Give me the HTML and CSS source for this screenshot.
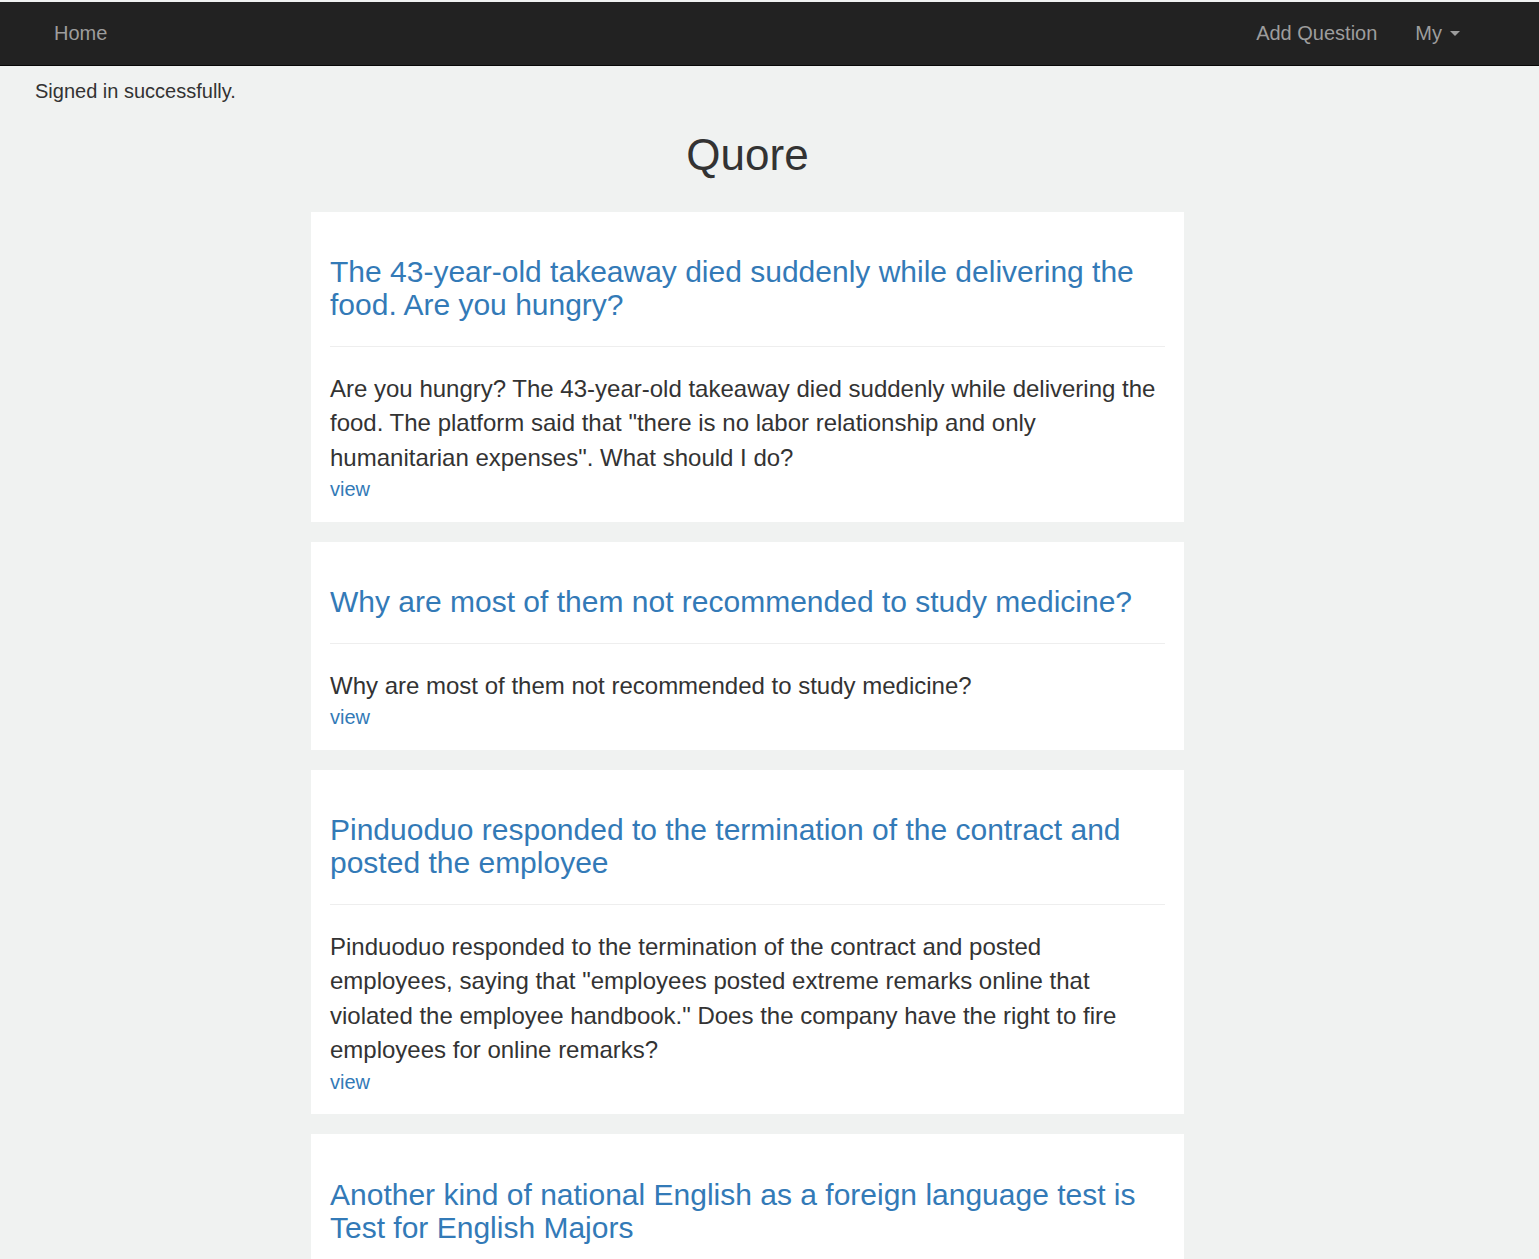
FILE: index.html
```html
<!DOCTYPE html>
<html lang="en">
<head>
<meta charset="utf-8">
<title>Quore</title>
<link rel="stylesheet" href="styles.css">
</head>
<body>
<nav class="navbar">
  <div class="nav-left">
    <a class="nav-link" href="#">Home</a>
  </div>
  <div class="nav-right">
    <a class="nav-link" href="#">Add Question</a>
    <a class="nav-link" href="#">My <span class="caret"></span></a>
  </div>
</nav>
<div class="page">
  <p class="notice">Signed in successfully.</p>
  <h1 class="title">Quore</h1>
  <div class="list">
    <div class="card">
      <h3 class="q-title"><a href="#">The 43-year-old takeaway died suddenly while delivering the food. Are you hungry?</a></h3>
      <hr class="sep">
      <p class="q-body">Are you hungry? The 43-year-old takeaway died suddenly while delivering the food. The platform said that "there is no labor relationship and only humanitarian expenses". What should I do?</p>
      <a class="view" href="#">view</a>
    </div>
    <div class="card">
      <h3 class="q-title"><a href="#">Why are most of them not recommended to study medicine?</a></h3>
      <hr class="sep">
      <p class="q-body">Why are most of them not recommended to study medicine?</p>
      <a class="view" href="#">view</a>
    </div>
    <div class="card">
      <h3 class="q-title"><a href="#">Pinduoduo responded to the termination of the contract and posted the employee</a></h3>
      <hr class="sep">
      <p class="q-body">Pinduoduo responded to the termination of the contract and posted employees, saying that "employees posted extreme remarks online that violated the employee handbook." Does the company have the right to fire employees for online remarks?</p>
      <a class="view" href="#">view</a>
    </div>
    <div class="card">
      <h3 class="q-title"><a href="#">Another kind of national English as a foreign language test is Test for English Majors</a></h3>
      <hr class="sep">
      <p class="q-body">Another kind of national English as a foreign language test is Test for English Majors. What is the difference between them?</p>
      <a class="view" href="#">view</a>
    </div>
  </div>
</div>
</body>
</html>
```
FILE: styles.css
```css
* { box-sizing: border-box; }
html { background: #f0f2f1; }
body {
  margin: 0;
  padding-top: 2px;
  background: #f0f2f1;
  font-family: "Liberation Sans", Arial, Helvetica, sans-serif;
  font-size: 20px;
  line-height: 1.42857;
  color: #333;
}
a { color: #337ab7; text-decoration: none; }

.navbar {
  height: 64px;
  background: #222;
  border-bottom: 1px solid #080808;
  display: flex;
  justify-content: space-between;
  align-items: center;
  padding: 0 60px 2px 35px;
}
.nav-left, .nav-right { display: flex; align-items: center; }
.nav-link {
  color: #9d9d9d;
  padding: 0 19px;
  line-height: 28px;
  display: flex;
  align-items: center;
}
.caret {
  display: inline-block;
  width: 0;
  height: 0;
  margin-left: 8px;
  margin-top: 2px;
  border-top: 5px solid #9d9d9d;
  border-left: 5px solid transparent;
  border-right: 5px solid transparent;
}

.page {
  width: 1495px;
}
.notice {
  margin: 11px 0 0 35px;
  line-height: 28.6px;
}
.title {
  margin: 25px 0 0;
  text-align: center;
  font-size: 44px;
  font-weight: 500;
  line-height: 48px;
  color: #333;
}
.list {
  width: 873px;
  margin: 33px auto 0;
  display: flex;
  flex-direction: column;
  gap: 20px;
}
.card {
  background: #fff;
  padding: 18px 19px;
}
.q-title {
  margin: 25.5px 0 0;
  font-size: 30px;
  font-weight: 500;
  line-height: 33px;
}
.sep {
  margin: 24.5px 0 0;
  border: 0;
  border-top: 1px solid #eee;
}
.q-body {
  margin: 25px 0 0;
  font-size: 24px;
  line-height: 34.5px;
}
.view {
  display: block;
  line-height: 28.6px;
}
```
